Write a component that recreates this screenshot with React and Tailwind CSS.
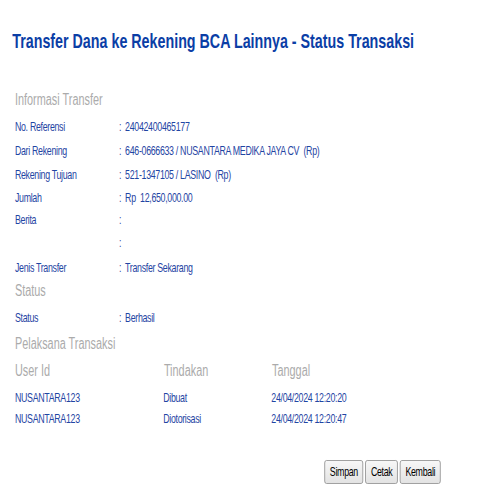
export default function App() {
  const rows = [
    { label: "No. Referensi", value: "24042400465177", h: "h-[24px]" },
    { label: "Dari Rekening", value: "646-0666633 / NUSANTARA MEDIKA JAYA CV\u00a0\u00a0(Rp)", h: "h-[24px]" },
    { label: "Rekening Tujuan", value: "521-1347105 / LASINO\u00a0\u00a0(Rp)", h: "h-[23px]" },
    { label: "Jumlah", value: "Rp\u00a0\u00a012,650,000.00", h: "h-[22px]" },
    { label: "Berita", value: "", h: "h-[23px]" },
    { label: "", value: "", h: "h-[25px]" },
    { label: "Jenis Transfer", value: "Transfer Sekarang", h: "h-[23px]" },
  ];
  const log = [
    { user: "NUSANTARA123", act: "Dibuat", date: "24/04/2024 12:20:20" },
    { user: "NUSANTARA123", act: "Diotorisasi", date: "24/04/2024 12:20:47" },
  ];
  const btn =
    "h-[24px] px-[7px] text-[13px] tracking-[-0.45px] leading-[22px] text-black border border-[#8f8f8f] rounded-[3px] bg-gradient-to-b from-[#f7f7f7] to-[#e3e3e3]";
  return (
    <div className="w-[500px] h-[500px] overflow-hidden bg-white">
      <div className="w-[736px] origin-top-left scale-x-[0.68] font-['Liberation_Sans',Arial,sans-serif] text-[#1f45a3] pt-[27px]">
        <h1 className="pl-[18px] h-[28px] text-[21px] leading-[28px] font-bold text-[#0b3ea6]">
          Transfer Dana ke Rekening BCA Lainnya - Status Transaksi
        </h1>
        <div className="mt-[33px] pl-[22px]">
          <div className="h-[27px] text-[16px] leading-[24px] text-[#ababab]">Informasi Transfer</div>
          {rows.map((r, i) => (
            <div key={i} className={`flex ${r.h} text-[13px] tracking-[-0.47px] leading-[24px]`}>
              <div className="w-[153px]">{r.label}</div>
              <div className="w-[9px]">:</div>
              <div>{r.value}</div>
            </div>
          ))}
          <div className="h-[27px] text-[16px] leading-[24px] text-[#ababab]">Status</div>
          <div className="flex h-[26px] text-[13px] tracking-[-0.47px] leading-[24px]">
            <div className="w-[153px]">Status</div>
            <div className="w-[9px]">:</div>
            <div>Berhasil</div>
          </div>
          <div className="h-[27px] text-[16px] leading-[24px] text-[#ababab]">Pelaksana Transaksi</div>
          <div className="flex h-[28px] text-[16px] leading-[24px] text-[#ababab]">
            <div className="w-[219px]">User Id</div>
            <div className="w-[159px]">Tindakan</div>
            <div>Tanggal</div>
          </div>
          {log.map((l, i) => (
            <div key={i} className="flex h-[21px] text-[13px] tracking-[-0.47px] leading-[21px]">
              <div className="w-[218px]">{l.user}</div>
              <div className="w-[159px]">{l.act}</div>
              <div>{l.date}</div>
            </div>
          ))}
        </div>
        <div className="mt-[31px] flex justify-end gap-[3px] pr-[88px]">
          <button className={btn}>Simpan</button>
          <button className={`${btn} from-[#e8e8e8] to-[#d6d6d6] border-[#7a7a7a]`}>Cetak</button>
          <button className={btn}>Kembali</button>
        </div>
      </div>
    </div>
  );
}
